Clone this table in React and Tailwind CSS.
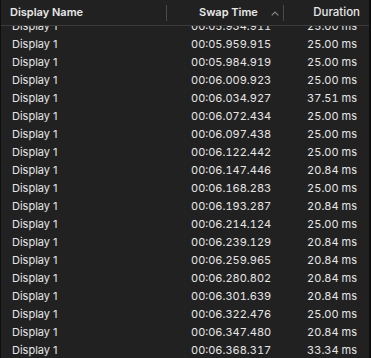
import React from 'react';

// Rows from the frame table, already scrolled a little so the first one is half hidden
const rows = [
  ['00:05.934.911', '25.00 ms'],
  ['00:05.959.915', '25.00 ms'],
  ['00:05.984.919', '25.00 ms'],
  ['00:06.009.923', '25.00 ms'],
  ['00:06.034.927', '37.51 ms'],
  ['00:06.072.434', '25.00 ms'],
  ['00:06.097.438', '25.00 ms'],
  ['00:06.122.442', '25.00 ms'],
  ['00:06.147.446', '20.84 ms'],
  ['00:06.168.283', '25.00 ms'],
  ['00:06.193.287', '20.84 ms'],
  ['00:06.214.124', '25.00 ms'],
  ['00:06.239.129', '20.84 ms'],
  ['00:06.259.965', '20.84 ms'],
  ['00:06.280.802', '20.84 ms'],
  ['00:06.301.639', '20.84 ms'],
  ['00:06.322.476', '25.00 ms'],
  ['00:06.347.480', '20.84 ms'],
  ['00:06.368.317', '33.34 ms'],
];

const App = () => {
  return (
    <div
      className="w-[371px] h-[358px] overflow-hidden bg-[#212121] border-l border-l-[#0e0e0e] border-r-2 border-r-[#0e0e0e] flex flex-col text-[11px] text-[#e6e6e6] whitespace-nowrap"
      style={{ fontFamily: 'Inter, "Liberation Sans", sans-serif' }}
    >
      <div className="h-[26px] shrink-0 flex items-center border-b border-[#3c3c3c] font-semibold text-[#e8e8e8]">
        <div className="w-[165px] pl-[9px]">Display Name</div>
        <div className="w-px h-4 bg-[#4a4a4a]" />
        <div className="w-[116px] flex items-center pl-[32px]">
          <span>Swap Time</span>
          <svg className="ml-[13px] mt-[1px]" width="8" height="5" viewBox="0 0 8 5" fill="none">
            <path d="M0.7 4.3 L4 1 L7.3 4.3" stroke="#8a8a8a" strokeWidth="1.2" />
          </svg>
        </div>
        <div className="w-px h-4 bg-[#4a4a4a]" />
        <div className="flex-1 text-right pr-[9px] font-medium text-[11.5px]">Duration</div>
      </div>
      <div className="flex-1 overflow-hidden">
        <div className="-mt-[10px]">
          {rows.map((r, i) => (
            <div key={i} className="h-[18px] flex items-center pt-[2px]">
              <div className="w-[171px] pl-[11px]">Display 1</div>
              <div className="w-[110px] pl-[19px] tabular-nums">{r[0]}</div>
              <div className="flex-1 text-right pr-[12px] tabular-nums">{r[1]}</div>
            </div>
          ))}
        </div>
      </div>
    </div>
  );
};

export default App;
